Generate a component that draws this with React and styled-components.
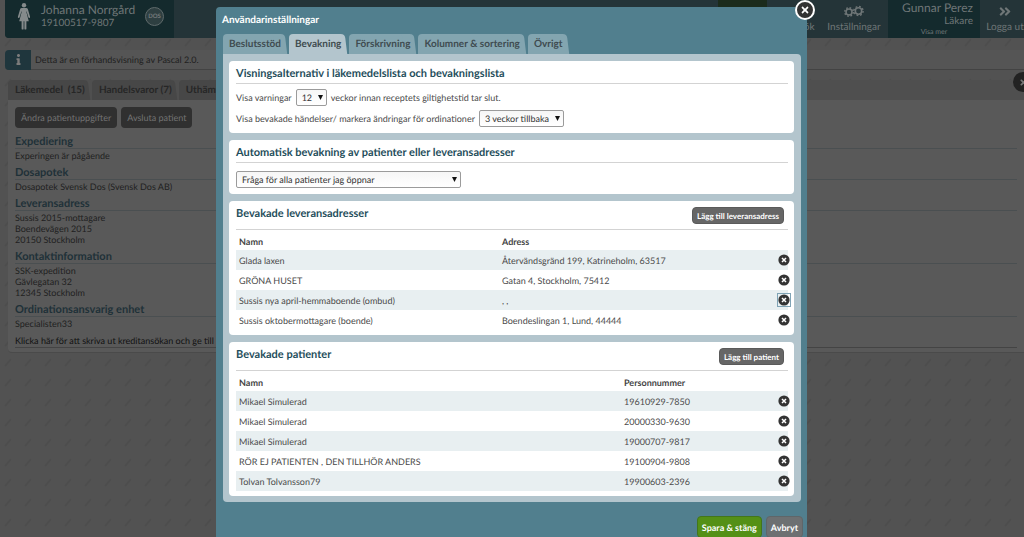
import React from 'react';
import styled, { createGlobalStyle, css } from 'styled-components';
import { FaInfo, FaAngleDoubleRight, FaTimes } from 'react-icons/fa';


const GlobalStyle = createGlobalStyle`
  *, *::before, *::after {
    box-sizing: border-box;
  }

  body {
    margin: 0;
    overflow: hidden;
    background: #525252;
    font-family: Lato, "Open Sans", sans-serif;
    font-size: 9px;
    line-height: 11px;
    color: #4a4a4a;
    text-rendering: geometricPrecision;
  }

  button, select {
    font-family: inherit;
    text-rendering: inherit;
  }

  h1, h2, h3, p {
    margin: 0;
  }
`;

const dash = encodeURIComponent(
  '<svg xmlns="http://www.w3.org/2000/svg" width="20" height="20"><path d="M5 6l6-7M5 26l6-7" stroke="#4d4d4d" stroke-width="2"/></svg>'
);

const Page = styled.div`
  position: relative;
  height: 100vh;
  overflow: hidden;
  background: #525252 url("data:image/svg+xml,${dash}");
  color: #1f1f1f;
`;

/* Page behind the dialog */

const Header = styled.header`
  display: flex;
  height: 38px;
  margin-left: 5px;
  overflow: hidden;
  border-bottom-left-radius: 4px;
  background: #243438;
  color: #6f7677;
`;

const PatientBox = styled.div`
  display: flex;
  align-items: flex-start;
  width: 169px;
  padding: 3px 10px 0 12px;
  background: #142a2d;
`;

const PatientInfo = styled.div`
  flex: 1;
  padding-left: 10px;
  font-size: 10px;
  line-height: 12px;
  white-space: nowrap;
`;

const PersonName = styled.div`
  font-size: 12px;
  line-height: 14px;
`;

const DosBadge = styled.span`
  display: flex;
  align-items: center;
  justify-content: center;
  width: 19px;
  height: 19px;
  margin-top: 4px;
  border: 1px solid #5f6a6b;
  border-radius: 50%;
  background: #2e3f41;
  font-size: 6px;
  font-weight: 900;
`;

const HeaderNav = styled.nav`
  display: flex;
  justify-content: flex-end;
  flex: 1;
  margin-right: -6px;
`;

const NavItem = styled.a`
  display: flex;
  flex-direction: column;
  align-items: center;
  width: ${({ $width }) => $width}px;
  padding-top: 4px;
  color: inherit;
  font-size: 10px;
  line-height: 16px;
  text-decoration: none;
  white-space: nowrap;

  svg {
    height: 15px;
  }
`;

const Shortcut = styled.div`
  width: 49px;
  height: 7px;
  margin-right: 26px;
  background: #1b2b1b;
`;

const UserBox = styled.div`
  width: 92px;
  padding: 1px 7px 0 0;
  background: #142a2d;
  font-size: 10px;
  line-height: 12px;
  text-align: right;

  small {
    display: block;
    margin-right: -7px;
    font-size: 7px;
    line-height: 10px;
    text-align: center;
  }
`;

const Notice = styled.div`
  display: flex;
  align-items: center;
  height: 20px;
  margin: 12px 0 10px 5px;
  border-bottom: 1px solid #434343;
  border-radius: 4px 0 0 4px;
  background: #555;
`;

const NoticeIcon = styled.span`
  display: flex;
  align-items: center;
  justify-content: center;
  width: 26px;
  height: 20px;
  margin-right: 4px;
  border-radius: 4px 0 0 4px;
  background: #1f363d;
  color: #7b7b7b;
`;

const tabShape = css`
  position: relative;
  z-index: 0;
  height: 20px;
  border: 0;
  background: none;
  font-size: 10px;
  font-weight: 700;
  line-height: 20px;
  white-space: nowrap;

  &::before,
  &::after {
    content: '';
    position: absolute;
    z-index: -1;
    top: 0;
    bottom: 0;
    background: var(--tab);
  }

  &::before {
    left: 0;
    right: 6px;
    border-top-left-radius: 4px;
  }

  &::after {
    right: 1px;
    width: 12px;
    border-top-right-radius: 4px;
    transform: skewX(7deg);
  }
`;

const PageTabs = styled.div`
  display: flex;
  gap: 2px;
  position: relative;
  margin-left: 8px;
  background: #4f4f4f;
`;

const PageTab = styled.button`
  ${tabShape}
  --tab: #474747;
  padding: 0 5px 0 7px;
  color: #262626;
  white-space: pre;
`;

const ExpandButton = styled.button`
  position: absolute;
  top: -8px;
  right: -9px;
  display: flex;
  align-items: center;
  justify-content: center;
  width: 20px;
  height: 20px;
  padding: 0;
  border: 0;
  border-radius: 50%;
  background: #222;
  color: #777;
`;

const PatientPanel = styled.main`
  margin-left: 8px;
  padding: 7px 7px 4px;
  border-bottom: 1px solid #4a4a4a;
  border-bottom-left-radius: 4px;
  background: #595959;
`;

const PanelActions = styled.div`
  display: flex;
  gap: 4px;
  margin-bottom: 8px;
`;

const PanelButton = styled.button`
  height: 21px;
  padding: 0 6px;
  border: 0;
  border-radius: 4px;
  background: #303030;
  color: #737373;
  font-size: 9px;
`;

const InfoBlock = styled.section`
  margin-bottom: 6px;

  h3 {
    margin-bottom: 1px;
    border-bottom: 1px solid #4a4f51;
    color: #1f3138;
    font-size: 11px;
    line-height: 12px;
  }
`;

const CreditLink = styled.a`
  display: block;
  border-bottom: 1px solid #444;
  color: #111;
  line-height: 12px;
  text-decoration: none;
`;

/* Dialog */

const Overlay = styled.div`
  position: fixed;
  inset: 0;
  display: flex;
  align-items: flex-start;
  justify-content: center;
  overflow: hidden;
  padding-right: 1px;
`;

const Dialog = styled.div`
  position: relative;
  width: 591px;
  margin-top: 7px;
  padding: 6px 6px 10px 7px;
  border-radius: 4px 4px 0 0;
  background: #517f8e;
  color: #4a4a4a;
`;

const DialogTitle = styled.h1`
  margin: 0 0 7px -1px;
  color: #fff;
  font-size: 10px;
  line-height: 14px;
`;

const CloseButton = styled.button`
  position: absolute;
  top: -7px;
  right: -8px;
  display: flex;
  align-items: center;
  justify-content: center;
  width: 20px;
  height: 20px;
  padding: 0;
  border: 2px solid #fff;
  border-radius: 50%;
  background: #333;
  color: #fff;
`;

const Tabs = styled.div`
  display: flex;
  gap: 2px;
`;

const Tab = styled.button`
  ${tabShape}
  --tab: ${({ $active }) => ($active ? '#b3c5cd' : '#83a5b0')};
  padding: 0 6px;
  color: #3f4c50;
`;

const TabPanel = styled.div`
  display: flex;
  flex-direction: column;
  gap: 7px;
  padding: 7px 7px 6px 6px;
  border-radius: 0 4px 4px 4px;
  background: #b3c5cd;
`;

const Section = styled.section`
  padding: 4px 6px 0 7px;
  border-radius: 4px;
  background: #fff;
`;

const SectionHead = styled.div`
  display: flex;
  justify-content: space-between;
  height: ${({ $tall }) => ($tall ? 25 : 19)}px;
  border-bottom: 1px solid #d3d3d3;

  h2 {
    color: #1f4e5b;
    font-size: 11px;
    line-height: 17px;
  }
`;

const AddButton = styled.button`
  height: 17px;
  margin: 2px 4px 0 0;
  padding: 0 4px;
  border: 1px solid #5a5a5a;
  border-radius: 4px;
  background: #666;
  color: #fff;
  font-size: 8px;
  font-weight: 700;
`;

const Fields = styled.div`
  display: grid;
  gap: 4px;
  padding: ${({ $top }) => $top}px 0 6px;
`;

const Field = styled.div`
  display: flex;
  align-items: center;
  gap: 4px;
`;

const SelectBox = styled.span`
  position: relative;
  width: ${({ $width }) => $width}px;
  height: 17px;

  select {
    appearance: none;
    display: block;
    width: 100%;
    height: 100%;
    padding: 0 5px;
    border: 1px solid #9b9b9b;
    border-radius: 2px;
    background: linear-gradient(#f6f6f6, #fff);
    color: #333;
    font-size: 9px;
  }

  svg {
    position: absolute;
    top: 6px;
    right: 4px;
    width: 5px;
    height: 5px;
    pointer-events: none;
  }
`;

const WatchTable = styled.table`
  width: 100%;
  margin-top: 3px;
  border-collapse: collapse;
  table-layout: fixed;

  th, td {
    height: 20px;
    padding: 0 3px;
    text-align: left;
  }

  th {
    height: 17px;
    color: #444;
  }

  th:first-child {
    width: ${({ $nameWidth }) => $nameWidth}px;
  }

  th:last-child, td:last-child {
    width: 11px;
    padding: 0;
  }

  tbody tr:nth-child(odd) {
    background: #e8eff1;
  }
`;

const TableFoot = styled.div`
  height: 5px;
`;

const RemoveButton = styled.button`
  display: flex;
  align-items: center;
  justify-content: center;
  width: 14px;
  height: 14px;
  padding: 0;
  border: 0;
  background: none;
  outline: ${({ $focused }) => ($focused ? '1px solid #7fa3b5' : 'none')};
  outline-offset: -1px;

  svg {
    width: 12px;
    height: 12px;
  }
`;

const Footer = styled.div`
  display: flex;
  justify-content: flex-end;
  gap: 4px;
  margin: 14px -2px 0 0;
`;

const FooterButton = styled.button`
  height: 22px;
  padding: 0 4px;
  border: 1px solid ${({ $primary }) => ($primary ? '#43761a' : '#5f6669')};
  border-radius: 4px;
  background: ${({ $primary }) => ($primary ? '#549016' : '#6d7072')};
  color: #fff;
  font-size: 9px;
  font-weight: 700;
`;

const patientBlocks = [
  { title: 'Expediering', lines: ['Experingen är pågående'] },
  { title: 'Dosapotek', lines: ['Dosapotek Svensk Dos (Svensk Dos AB)'] },
  { title: 'Leveransadress', lines: ['Sussis 2015-mottagare', 'Boendevägen 2015', '20150 Stockholm'] },
  { title: 'Kontaktinformation', lines: ['SSK-expedition', 'Gävlegatan 32', '12345 Stockholm'] },
  { title: 'Ordinationsansvarig enhet', lines: ['Specialisten33'] }
];

const dialogTabs = ['Beslutsstöd', 'Bevakning', 'Förskrivning', 'Kolumner & sortering', 'Övrigt'];

const addresses = [
  ['Glada laxen', 'Återvändsgränd 199, Katrineholm, 63517'],
  ['GRÖNA HUSET', 'Gatan 4, Stockholm, 75412'],
  ['Sussis nya april-hemmaboende (ombud)', ', ,'],
  ['Sussis oktobermottagare (boende)', 'Boendeslingan 1, Lund, 44444']
];

const patients = [
  ['Mikael Simulerad', '19610929-7850'],
  ['Mikael Simulerad', '20000330-9630'],
  ['Mikael Simulerad', '19000707-9817'],
  ['RÖR EJ PATIENTEN , DEN TILLHÖR ANDERS', '19100904-9808'],
  ['Tolvan Tolvansson79', '19900603-2396']
];

const WomanIcon = () => (
  <svg width="14" height="27" viewBox="0 0 14 27" fill="#858a8b">
    <circle cx="7" cy="2.3" r="2.2" />
    <path d="M4.8 5h4.4q1.3 0 1.7 1.3l2.2 7.4q.2 1-.6 1.2t-1.1-.6L9.6 8.6h-.4l2.6 9.6H9.4v7.5q0 .9-1 .9t-1-.9v-7.5h-.8v7.5q0 .9-1 .9t-1-.9v-7.5H2.2l2.6-9.6h-.4l-1.8 5.7q-.3.8-1.1.6t-.6-1.2l2.2-7.4Q3.500 5 4.8 5z" />
  </svg>
);

const CogsIcon = () => (
  <svg width="20" height="15" viewBox="0 0 20 15" fill="none" stroke="currentColor">
    <circle cx="5" cy="8" r="3" strokeWidth="1.6" />
    <circle cx="5" cy="8" r="4.3" strokeWidth="1.4" strokeDasharray="1.7 1.68" />
    <circle cx="14.5" cy="7" r="3.2" strokeWidth="1.6" />
    <circle cx="14.5" cy="7" r="4.6" strokeWidth="1.4" strokeDasharray="1.8 1.81" />
  </svg>
);

const RemoveIcon = () => (
  <svg viewBox="0 0 12 12">
    <circle cx="6" cy="6" r="5.6" fill="#333" />
    <path d="M4 4l4 4M8 4l-4 4" stroke="#fff" strokeWidth="1.5" />
  </svg>
);

const Select = ({ id, width, value, label }) => (
  <SelectBox $width={width}>
    <select id={id} aria-label={label} defaultValue={value}>
      <option>{value}</option>
    </select>
    <svg viewBox="0 0 5 5"><path d="M0 0h5L2.5 5z" fill="#111" /></svg>
  </SelectBox>
);

const WatchList = ({ title, action, column, nameWidth, rows, focusedRow }) => (
  <Section>
    <SectionHead $tall>
      <h2>{title}</h2>
      <AddButton type="button">{action}</AddButton>
    </SectionHead>
    <WatchTable $nameWidth={nameWidth}>
      <thead>
        <tr>
          <th>Namn</th>
          <th>{column}</th>
          <th aria-label="Ta bort" />
        </tr>
      </thead>
      <tbody>
        {rows.map(([name, detail], index) => (
          <tr key={detail}>
            <td>{name}</td>
            <td>{detail}</td>
            <td>
              <RemoveButton type="button" aria-label="Ta bort" $focused={index === focusedRow}>
                <RemoveIcon />
              </RemoveButton>
            </td>
          </tr>
        ))}
      </tbody>
    </WatchTable>
    <TableFoot />
  </Section>
);

const PatientPage = () => (
  <>
    <Header>
      <PatientBox>
        <WomanIcon />
        <PatientInfo>
          <PersonName>Johanna Norrgård</PersonName>
          19100517-9807
        </PatientInfo>
        <DosBadge>DOS</DosBadge>
      </PatientBox>
      <HeaderNav>
        <Shortcut />
        <NavItem href="#" $width={27}>
          <svg />
          Sök
        </NavItem>
        <NavItem href="#" $width={68}>
          <CogsIcon />
          Inställningar
        </NavItem>
        <UserBox>
          <PersonName>Gunnar Perez</PersonName>
          Läkare
          <small>Visa mer</small>
        </UserBox>
        <NavItem href="#" $width={50}>
          <FaAngleDoubleRight size={12} />
          Logga ut
        </NavItem>
      </HeaderNav>
    </Header>
    <Notice>
      <NoticeIcon><FaInfo size={11} /></NoticeIcon>
      Detta är en förhandsvisning av Pascal 2.0.
    </Notice>
    <PageTabs>
      <PageTab type="button">{'Läkemedel  (15)'}</PageTab>
      <PageTab type="button">Handelsvaror (7)</PageTab>
      <PageTab type="button">Uthämtade</PageTab>
      <ExpandButton type="button" aria-label="Visa"><FaTimes size={9} /></ExpandButton>
    </PageTabs>
    <PatientPanel>
      <PanelActions>
        <PanelButton type="button">Ändra patientuppgifter</PanelButton>
        <PanelButton type="button">Avsluta patient</PanelButton>
      </PanelActions>
      {patientBlocks.map(({ title, lines }) => (
        <InfoBlock key={title}>
          <h3>{title}</h3>
          {lines.map(line => <p key={line}>{line}</p>)}
        </InfoBlock>
      ))}
      <CreditLink href="#">Klicka här för att skriva ut kreditansökan och ge till patienten</CreditLink>
    </PatientPanel>
  </>
);

const SettingsDialog = () => (
  <Dialog role="dialog" aria-labelledby="settings-title">
    <DialogTitle id="settings-title">Användarinställningar</DialogTitle>
    <CloseButton type="button" aria-label="Stäng"><FaTimes size={10} /></CloseButton>
    <Tabs>
      {dialogTabs.map(tab => (
        <Tab key={tab} type="button" $active={tab === 'Bevakning'}>{tab}</Tab>
      ))}
    </Tabs>
    <TabPanel>
      <Section>
        <SectionHead>
          <h2>Visningsalternativ i läkemedelslista och bevakningslista</h2>
        </SectionHead>
        <Fields $top={5}>
          <Field>
            <label htmlFor="weeks">Visa varningar</label>
            <Select id="weeks" width={31} value="12" />
            <span>veckor innan receptets giltighetstid tar slut.</span>
          </Field>
          <Field>
            <label htmlFor="events">Visa bevakade händelser/ markera ändringar för ordinationer</label>
            <Select id="events" width={85} value="3 veckor tillbaka" />
          </Field>
        </Fields>
      </Section>
      <Section>
        <SectionHead>
          <h2>Automatisk bevakning av patienter eller leveransadresser</h2>
        </SectionHead>
        <Fields $top={8}>
          <Select
            id="auto-watch"
            width={225}
            value="Fråga för alla patienter jag öppnar"
            label="Automatisk bevakning" />
        </Fields>
      </Section>
      <WatchList
        title="Bevakade leveransadresser"
        action="Lägg till leveransadress"
        column="Adress"
        nameWidth={263}
        rows={addresses}
        focusedRow={2} />
      <WatchList
        title="Bevakade patienter"
        action="Lägg till patient"
        column="Personnummer"
        nameWidth={385}
        rows={patients} />
    </TabPanel>
    <Footer>
      <FooterButton type="button" $primary>Spara &amp; stäng</FooterButton>
      <FooterButton type="button">Avbryt</FooterButton>
    </Footer>
  </Dialog>
);

const App = () => (
  <Page>
    <GlobalStyle />
    <PatientPage />
    <Overlay>
      <SettingsDialog />
    </Overlay>
  </Page>
);

export default App;
